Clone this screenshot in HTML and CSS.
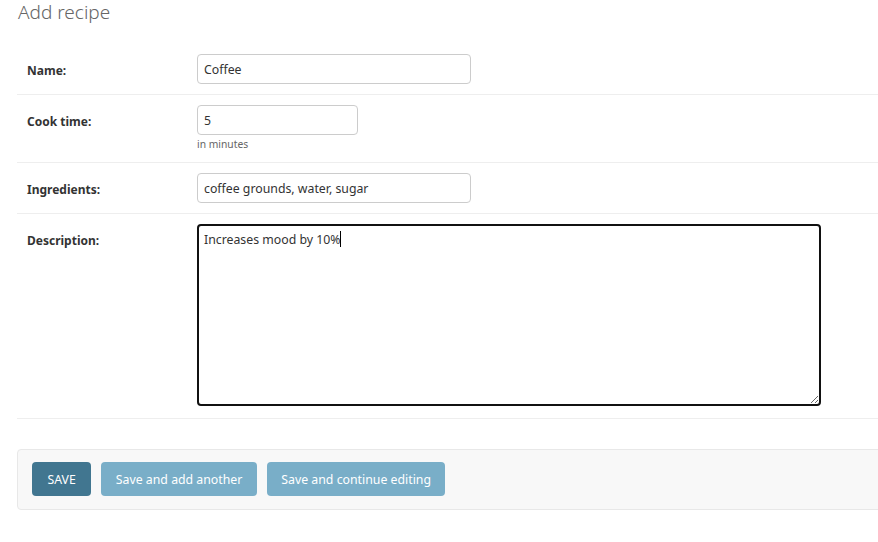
FILE: index.html
```html
<!DOCTYPE html>
<html>
<head>
<meta charset="utf-8">
<link rel="stylesheet" href="styles.css">
</head>
<body>
<div class="content">
  <h1 class="title">Add recipe</h1>
  <form class="form">
    <fieldset class="module">
      <div class="form-row">
        <label class="label">Name:</label>
        <div class="field"><input class="input input-wide" type="text" value="Coffee"></div>
      </div>
      <div class="form-row">
        <label class="label">Cook time:</label>
        <div class="field">
          <input class="input input-short" type="text" value="5">
          <div class="help">in minutes</div>
        </div>
      </div>
      <div class="form-row">
        <label class="label">Ingredients:</label>
        <div class="field"><input class="input input-wide" type="text" value="coffee grounds, water, sugar"></div>
      </div>
      <div class="form-row">
        <label class="label">Description:</label>
        <div class="field"><div class="textarea">Increases mood by 10%<span class="caret"></span></div></div>
      </div>
    </fieldset>
    <div class="submit-row">
      <button type="button" class="btn btn-default">SAVE</button>
      <button type="button" class="btn">Save and add another</button>
      <button type="button" class="btn">Save and continue editing</button>
    </div>
  </form>
</div>
</body>
</html>
```
FILE: styles.css
```css
html, body {
  margin: 0;
  padding: 0;
  overflow: hidden;
  background: #fff;
}
body {
  font-family: "Noto Sans", "Open Sans", sans-serif;
  color: #333;
  font-size: 14px;
}
.content {
  padding: 0 0 0 17px;
  margin-right: -20px;
}
.title {
  margin: 0;
  padding: 0 0 0 1px;
  font-size: 19px;
  line-height: 24px;
  font-weight: 300;
  color: #666;
  height: 44px;
  box-sizing: border-box;
}
.module {
  margin: 0;
  padding: 0;
  border: 0;
}
.form-row {
  display: flex;
  padding: 10px;
  border-bottom: 1px solid #eee;
}
.form-row:last-child {
  padding-bottom: 12px;
}
.label {
  width: 160px;
  padding: 8px 10px 0 0;
  font-weight: bold;
  font-size: 12px;
  color: #333;
  flex: none;
}
.field {
  display: flex;
  flex-direction: column;
}
.input {
  box-sizing: border-box;
  height: 30px;
  border: 1px solid #ccc;
  border-radius: 4px;
  padding: 0 6px;
  font-family: inherit;
  font-size: 12.3px;
  color: #333;
  margin: 0;
}
.input-wide { width: 274px; }
.input-short { width: 161px; }
.help {
  font-size: 10.3px;
  color: #666;
  margin-top: 2px;
  line-height: 15px;
}
.textarea {
  box-sizing: border-box;
  width: 624px;
  height: 182px;
  border: 2px solid #111;
  border-radius: 4px;
  padding: 4px 5px;
  font-size: 12.3px;
  line-height: 20px;
  color: #333;
  resize: both;
  overflow: auto;
}
.caret {
  display: inline-block;
  width: 1px;
  height: 16px;
  background: #000;
  vertical-align: -3px;
}
.submit-row {
  margin-top: 30px;
  display: flex;
  gap: 10px;
  padding: 12px 14px 13px;
  background: #f8f8f8;
  border: 1px solid #e8e8e8;
  border-radius: 4px;
}
.btn {
  height: 34px;
  padding: 0 14.5px;
  border: 0;
  border-radius: 4px;
  background: #79aec8;
  color: #fff;
  font-family: inherit;
  font-size: 12.3px;
}
.btn-default {
  background: #417690;
  padding: 0 15.5px;
}
```
